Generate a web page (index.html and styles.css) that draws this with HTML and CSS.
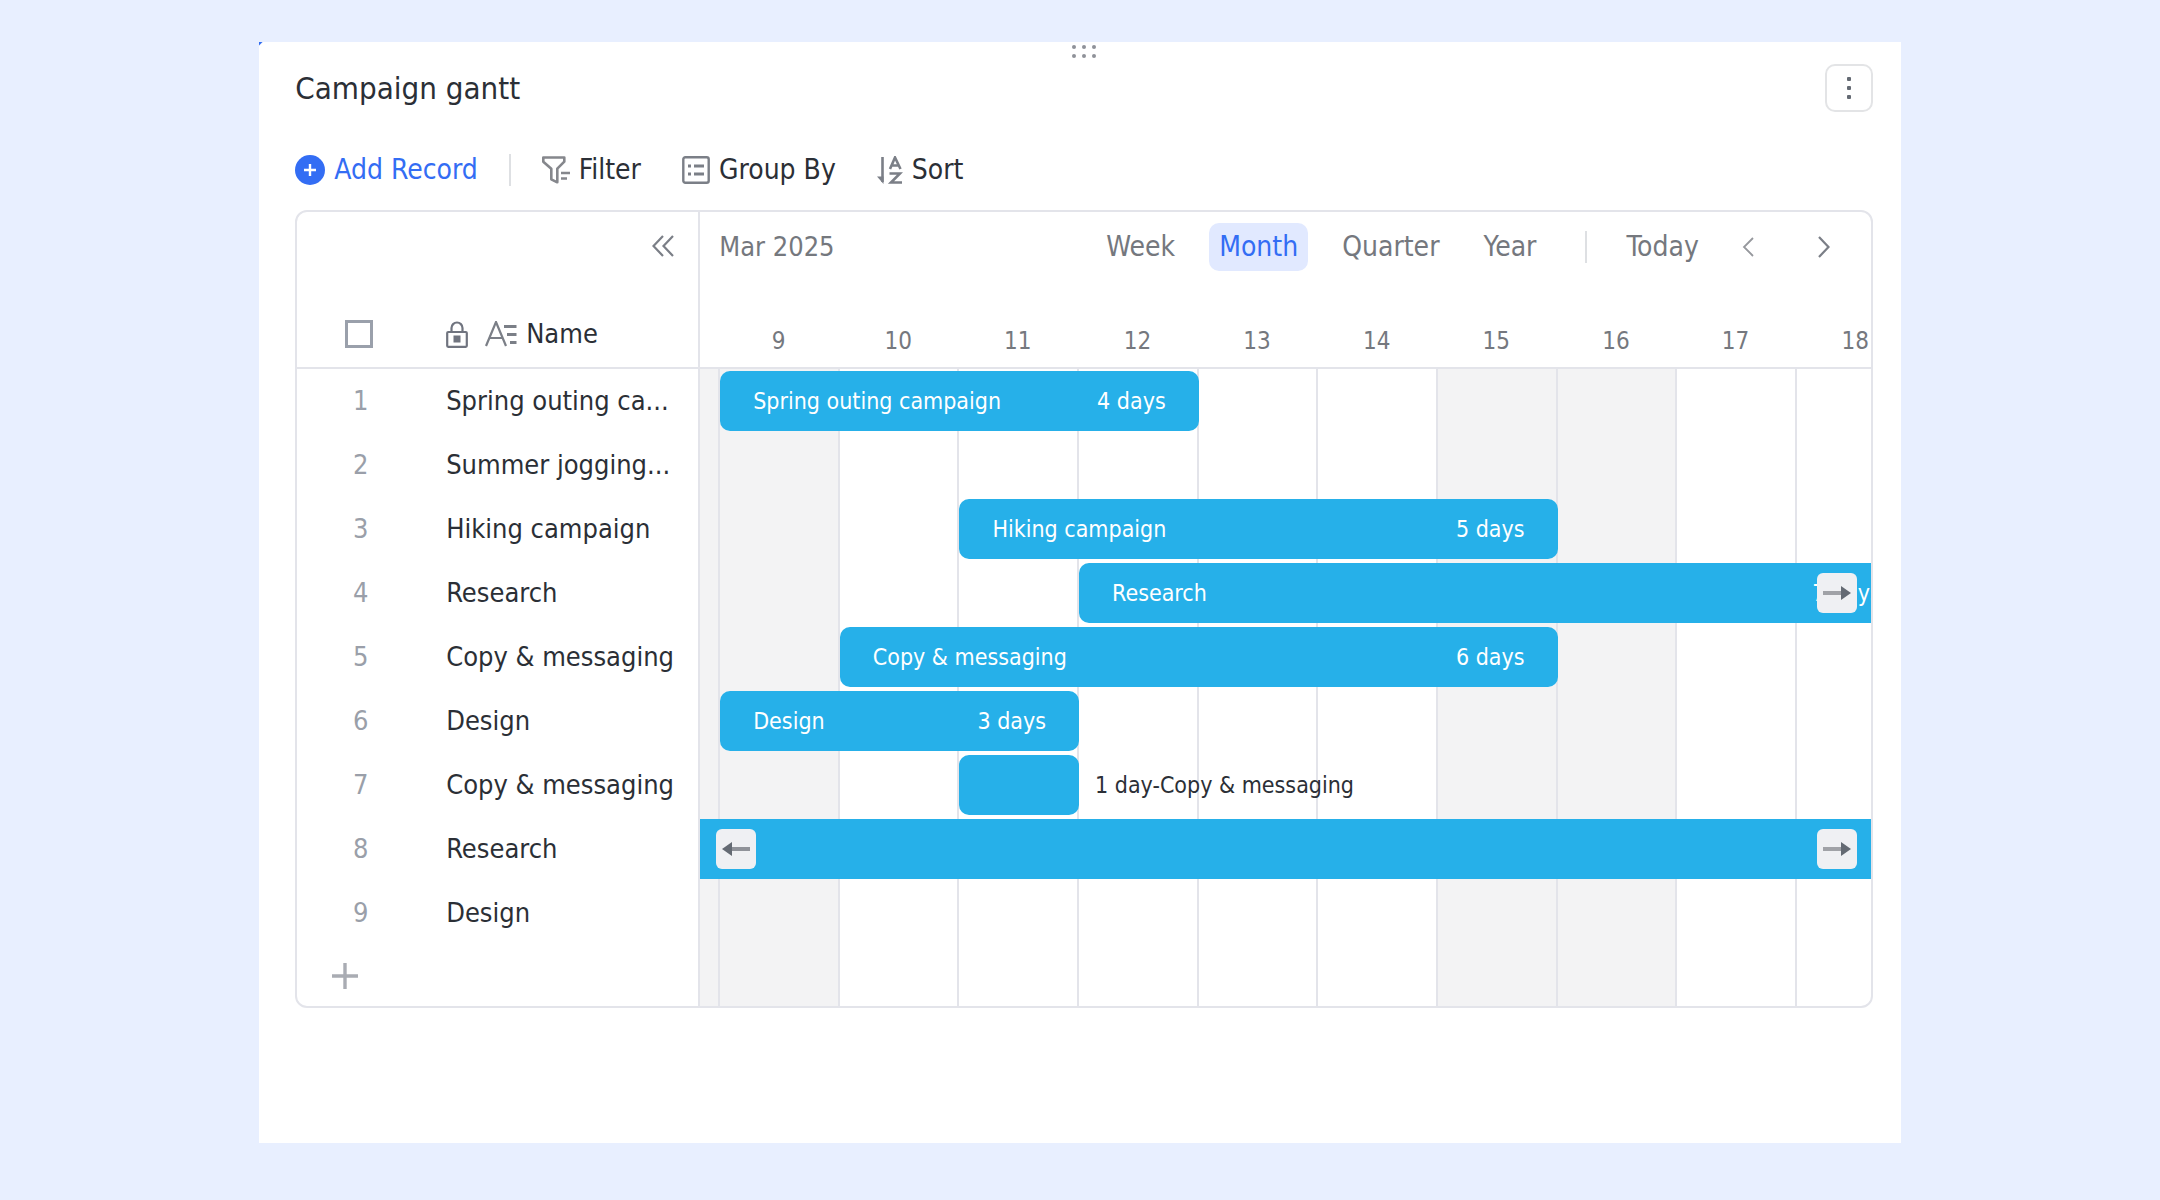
FILE: index.html
```html
<!DOCTYPE html>
<html lang="en">
<head>
<meta charset="utf-8">
<title>Campaign gantt</title>
<link rel="stylesheet" href="styles.css">
</head>
<body>
<main class="card">
  <div class="drag-handle">
    <svg width="24" height="14" viewBox="0 0 24 14" fill="#8f9299"><circle cx="2" cy="2" r="2"/><circle cx="12" cy="2" r="2"/><circle cx="22" cy="2" r="2"/><circle cx="2" cy="11" r="2"/><circle cx="12" cy="11" r="2"/><circle cx="22" cy="11" r="2"/></svg>
  </div>
  <header class="card-header">
    <h1 class="title">Campaign gantt</h1>
    <button class="more" aria-label="More">
      <svg width="4" height="22" viewBox="0 0 4 22" fill="#646a73"><rect width="4" height="4" rx="1"/><rect y="9" width="4" height="4" rx="1"/><rect y="18" width="4" height="4" rx="1"/></svg>
    </button>
  </header>
  <div class="toolbar">
    <button class="tool tool-primary">
      <svg width="30" height="30" viewBox="0 0 30 30"><circle cx="15" cy="15" r="15" fill="#336df4"/><path d="M15 9v12M9 15h12" stroke="#fff" stroke-width="2.4"/></svg>
      Add Record
    </button>
    <span class="divider"></span>
    <button class="tool">
      <svg width="28" height="28" viewBox="0 0 28 28" fill="none" stroke="#85878c" stroke-width="2.6" stroke-linejoin="round"><path d="M1.3 1.5h21v4.2l-7 7v13.6l-6-3V12.700l-8-7z"/><path d="M19 17h9M19 22.500h6"/></svg>
      Filter
    </button>
    <button class="tool">
      <svg width="28" height="28" viewBox="0 0 28 28" fill="none" stroke="#7b7f87" stroke-width="2.400"><rect x="1.300" y="1.300" width="25.400" height="25.400" rx="2"/><path d="M6 10h3M12 10h10M6 18h3M12 18h10" stroke-width="3"/></svg>
      Group By
    </button>
    <button class="tool">
      <svg width="26" height="28" viewBox="0 0 26 28" fill="none" stroke="#7b7f87" stroke-width="2.600"><path d="M5.500 1v25"/><path d="M0 20.500h6.500V28z" fill="#7b7f87" stroke="none"/><path d="M13 13l5-11.500L23.500 13M14.500 9.500h7.500"/><path d="M12.500 17.500h10.500l-9 9H25"/></svg>
      Sort
    </button>
  </div>

  <section class="gantt">
    <div class="records">
      <div class="records-top">
        <button class="icon-btn" aria-label="Collapse">
          <svg width="22" height="22" viewBox="0 0 22 22" fill="none" stroke="#7b7f87" stroke-width="2.200"><path d="M11 1L1.500 11 11 21M21 1l-9.500 10L21 21"/></svg>
        </button>
      </div>
      <table class="record-table">
        <thead>
          <tr>
            <th class="num"><input type="checkbox" class="check" aria-label="Select all"></th>
            <th class="name"><span class="name-head">
              <svg class="lock" width="22" height="27" viewBox="0 0 22 27" fill="none" stroke="#70747f" stroke-width="2.200"><rect x="1.200" y="11" width="19.600" height="14.800" rx="1"/><path d="M5.500 11V7a5.500 5.500 0 0 1 11 0v4"/><rect x="7.500" y="14.500" width="7" height="7" fill="#70747f" stroke="none"/></svg>
              <svg width="32" height="26" viewBox="0 0 32 26" fill="none" stroke="#7b7f87" stroke-width="2.200"><path d="M1 25L11 1l10 24M4.500 17h13"/><path d="M19 5.500h12.500M22 13.500h9.500M25 21.500h6.500" stroke-width="3"/></svg>
              Name</span></th>
          </tr>
        </thead>
        <tbody>
          <tr><td class="num">1</td><td class="name">Spring outing ca...</td></tr>
          <tr><td class="num">2</td><td class="name">Summer jogging...</td></tr>
          <tr><td class="num">3</td><td class="name">Hiking campaign</td></tr>
          <tr><td class="num">4</td><td class="name">Research</td></tr>
          <tr><td class="num">5</td><td class="name">Copy &amp; messaging</td></tr>
          <tr><td class="num">6</td><td class="name">Design</td></tr>
          <tr><td class="num">7</td><td class="name">Copy &amp; messaging</td></tr>
          <tr><td class="num">8</td><td class="name">Research</td></tr>
          <tr><td class="num">9</td><td class="name">Design</td></tr>
        </tbody>
      </table>
      <button class="add-row" aria-label="Add record">
        <svg width="26" height="26" viewBox="0 0 26 26" stroke="#a9acb3" stroke-width="3.400"><path d="M13 0v26M0 13h26"/></svg>
      </button>
    </div>

    <div class="chart">
      <div class="chart-top">
        <span class="period">Mar 2025</span>
        <nav class="scales">
          <button class="scale">Week</button>
          <button class="scale scale-active">Month</button>
          <button class="scale">Quarter</button>
          <button class="scale">Year</button>
        </nav>
        <span class="divider"></span>
        <button class="today">Today</button>
        <button class="icon-btn prev" aria-label="Previous">
          <svg width="12" height="22" viewBox="0 0 12 22" fill="none" stroke="#96989d" stroke-width="1.800"><path d="M11 2L2 11l9 9"/></svg>
        </button>
        <button class="icon-btn next" aria-label="Next">
          <svg width="12" height="22" viewBox="0 0 12 22" fill="none" stroke="#7b7f87" stroke-width="2.200"><path d="M1 1l9.500 10L1 21"/></svg>
        </button>
      </div>
      <div class="days track">
        <span></span><span>9</span><span>10</span><span>11</span><span>12</span><span>13</span><span>14</span><span>15</span><span>16</span><span>17</span><span class="day-cut">18</span>
      </div>
      <div class="chart-body">
        <div class="stripes track">
          <i class="off"></i><i class="off"></i><i></i><i></i><i></i><i></i><i></i><i class="off"></i><i class="off"></i><i></i><i></i>
        </div>
        <div class="lanes">
          <div class="lane track"><div class="bar" style="grid-column: 2 / 6"><span>Spring outing campaign</span><span>4 days</span></div></div>
          <div class="lane track"></div>
          <div class="lane track"><div class="bar" style="grid-column: 4 / 9"><span>Hiking campaign</span><span>5 days</span></div></div>
          <div class="lane track">
            <div class="bar bar-beyond" style="grid-column: 5 / 12"><span>Research</span><span>7 days</span></div>
            <button class="jump jump-right" aria-label="Jump to end"><svg width="28" height="14" viewBox="0 0 28 14"><path d="M0 7h20" stroke="#a0a2a7" stroke-width="4"/><path d="M18 0l10 7-10 7z" fill="#646a73"/></svg></button>
          </div>
          <div class="lane track"><div class="bar" style="grid-column: 3 / 9"><span>Copy &amp; messaging</span><span>6 days</span></div></div>
          <div class="lane track"><div class="bar" style="grid-column: 2 / 5"><span>Design</span><span>3 days</span></div></div>
          <div class="lane track"><div class="bar" style="grid-column: 4 / 5"></div><span class="bar-label">1 day-Copy &amp; messaging</span></div>
          <div class="lane track">
            <div class="bar bar-full" style="grid-column: 1 / 12"></div>
            <button class="jump jump-left" aria-label="Jump to start"><svg width="28" height="14" viewBox="0 0 28 14"><path d="M8 7h20" stroke="#8f9299" stroke-width="4"/><path d="M10 0L0 7l10 7z" fill="#646a73"/></svg></button>
            <button class="jump jump-right" aria-label="Jump to end"><svg width="28" height="14" viewBox="0 0 28 14"><path d="M0 7h20" stroke="#a0a2a7" stroke-width="4"/><path d="M18 0l10 7-10 7z" fill="#646a73"/></svg></button>
          </div>
          <div class="lane track"></div>
        </div>
      </div>
    </div>
  </section>
</main>
</body>
</html>
```
FILE: styles.css
```css
* {
  box-sizing: border-box;
}

body {
  margin: 0;
  min-height: 100vh;
  padding: 42px 12% 57px;
  display: flex;
  flex-direction: column;
  background: #e8efff;
  color: #2b2f36;
  font-family: "DejaVu Sans Condensed", "Noto Sans", sans-serif;
  font-size: 27px;
  line-height: 36px;
}

button {
  border: 0;
  padding: 0;
  background: none;
  color: inherit;
  font: inherit;
  display: flex;
  align-items: center;
  justify-content: center;
}

svg {
  display: block;
  flex: none;
}

.card {
  flex: 1;
  padding: 0 28px 0 36px;
  background: linear-gradient(135deg, #2f6bf0 2px, #fff 3px);
}

.drag-handle {
  display: flex;
  justify-content: center;
  height: 22px;
  padding-top: 3px;
}

.card-header {
  display: flex;
  align-items: center;
  justify-content: space-between;
  height: 48px;
}

.title {
  margin: 0;
  font-size: 31px;
  font-weight: 400;
  line-height: 40px;
}

.more {
  width: 48px;
  height: 48px;
  border: 2px solid #e3e4e6;
  border-radius: 10px;
}

.toolbar {
  display: flex;
  align-items: center;
  gap: 41px;
  height: 98px;
  padding-top: 18px;
  font-size: 28px;
}

.tool {
  gap: 9px;
}

.toolbar .divider {
  margin: 0 -10px;
}

.tool-primary {
  color: #336df4;
}

.divider {
  width: 2px;
  height: 32px;
  background: #dee0e3;
}

.gantt {
  display: grid;
  grid-template-columns: 403px 1fr;
  border: 2px solid #e3e4ea;
  border-radius: 12px;
  overflow: hidden;
}

.records {
  border-right: 2px solid #e3e4ea;
}

.records-top {
  display: flex;
  justify-content: flex-end;
  align-items: center;
  height: 68px;
  padding-right: 24px;
}

.record-table {
  width: 100%;
  border-spacing: 0;
  table-layout: fixed;
}

.record-table th,
.record-table td {
  height: 64px;
  padding: 0;
  font-weight: 400;
  text-align: left;
  white-space: nowrap;
}

.record-table th {
  height: 89px;
  padding-bottom: 15px;
  vertical-align: bottom;
  border-bottom: 2px solid #e3e4ea;
}

.record-table .num {
  width: 149px;
  padding-left: 18px;
  padding-right: 40px;
  color: #9a9fa9;
  text-align: center;
}

.record-table th.num {
  padding-left: 14px;
}

.check {
  appearance: none;
  display: block;
  width: 28px;
  height: 28px;
  margin: 0 auto 4px;
  border: 3px solid #9aa0ab;
}

.name-head {
  display: flex;
  align-items: center;
  gap: 9px;
}

.lock {
  margin-right: 8px;
}

.add-row {
  width: 26px;
  height: 61px;
  margin-left: 35px;
}

.chart {
  min-width: 0;
}

.chart-top {
  display: flex;
  align-items: center;
  height: 70px;
  padding: 0 41px 0 19px;
  color: #75787e;
}

.period {
  margin-right: auto;
}

.scales {
  display: flex;
  gap: 24px;
  margin-right: 39px;
  font-size: 28px;
}

.scale {
  height: 48px;
  padding: 0 10px;
  border-radius: 10px;
}

.scale-active {
  background: #e1e9ff;
  color: #336df4;
}

.today {
  margin-left: 39px;
  font-size: 28px;
}

.prev {
  margin-left: 43px;
}

.next {
  margin-left: 64px;
}

.track {
  display: grid;
  grid-template-columns: 20px repeat(9, 1fr) 74px;
}

.days {
  height: 87px;
  padding-top: 41px;
  border-bottom: 2px solid #e3e4ea;
  color: #75787e;
  font-size: 24px;
  line-height: 36px;
  text-align: center;
}

.days span {
  padding-right: 3px;
}

.day-cut {
  min-width: 120px;
}

.chart-body {
  display: grid;
}

.stripes,
.lanes {
  grid-area: 1 / 1;
  min-width: 0;
}

.stripes i {
  border-right: 2px solid #e3e4ea;
}

.stripes i:last-child {
  border-right: 0;
}

.stripes .off {
  background: #f3f3f4;
}

.lanes {
  padding-bottom: 61px;
}

.lane {
  height: 64px;
  padding: 2px 0;
  overflow: hidden;
  font-size: 23px;
}

.bar {
  grid-row: 1;
  display: flex;
  align-items: center;
  justify-content: space-between;
  padding: 0 33px;
  border-radius: 10px;
  background: #26b0e9;
  color: #fff;
  white-space: nowrap;
}

.bar-beyond {
  margin-right: -43px;
}

.bar-full {
  border-radius: 0;
}

.bar-label {
  grid-row: 1;
  grid-column: 5 / 9;
  align-self: center;
  padding-left: 16px;
}

.jump {
  grid-row: 1;
  align-self: center;
  width: 40px;
  height: 40px;
  border-radius: 6px;
  background: #eff0f3;
}

.jump-left {
  grid-column: 1 / 3;
  margin-left: 16px;
}

.jump-right {
  grid-column: 10 / 12;
  justify-self: end;
  margin-right: 14px;
}
```
